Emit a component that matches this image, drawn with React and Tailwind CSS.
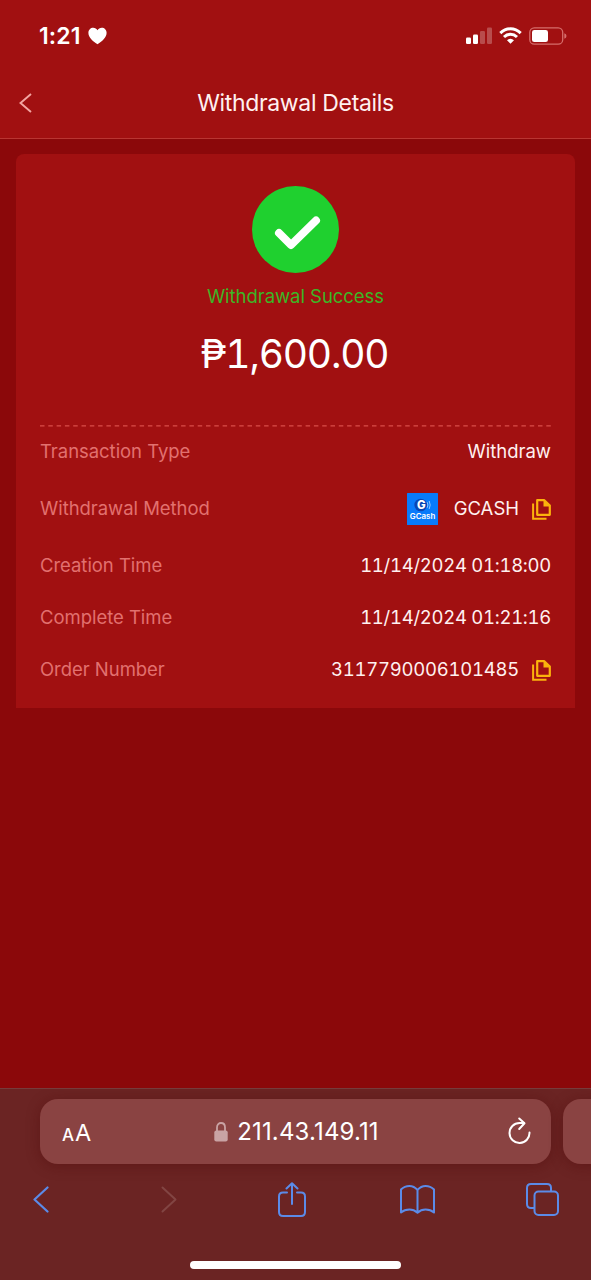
const MUTED = "text-[#e2716f]"

function CopyIcon() {
  return (
    <svg width="19" height="21" viewBox="0 0 19 21" fill="none" stroke="#fbb30c" strokeWidth="2.200">
      <path d="M1.100 4.500V19.800H14.500" strokeWidth="2" />
      <path d="M5.200 1.200H12.300L17.800 6.500V15.800H5.200Z" strokeLinejoin="round" />
      <path d="M11.500 1V7.500H18L12.500 1.500Z" fill="#fbb30c" stroke="none" />
    </svg>
  )
}

function GcashLogo() {
  return (
    <svg width="31" height="32" viewBox="0 0 31 32">
      <rect width="31" height="32" rx="0.500" fill="#087bfb" />
      <circle cx="13.700" cy="12" r="6.300" fill="#0a45b4" />
      <text x="14.300" y="16" textAnchor="middle" fontFamily="Inter, sans-serif" fontSize="11.500" fontWeight="800" fill="#fff">G</text>
      <path d="M20.200 9.200Q21.600 12 20.200 14.800M22.200 8Q24.200 12 22.200 16" fill="none" stroke="#8cc4ff" strokeWidth="1" />
      <text x="15.500" y="26" textAnchor="middle" textLength="25.500" lengthAdjust="spacingAndGlyphs" fontFamily="Inter, sans-serif" fontSize="7.500" fontWeight="600" fill="#fff">GCash</text>
    </svg>
  )
}

function StatusBar() {
  return (
    <div className="h-[70px] flex items-center justify-between pl-[39px] pr-[24px] pt-[1px]">
      <div className="flex items-center gap-[7px]">
        <span className="text-[23px] leading-none font-semibold tracking-[0.1px] pt-[1px]">1:21</span>
        <svg width="19" height="18" viewBox="0 0 19 18" fill="#fff">
          <path d="M9.5 17.3C4.5 14 .4 10.400.4 5.800C.4 2.800 2.600.7 5.200.7C7.100.7 8.700 1.700 9.500 3.200C10.300 1.700 11.900.7 13.800.7C16.400.7 18.600 2.800 18.600 5.800C18.600 10.400 14.500 14 9.500 17.300Z" />
        </svg>
      </div>
      <div className="flex items-center gap-[7px]">
        <svg width="27" height="17" viewBox="0 0 27 17" fill="#fff">
          <rect x="1" y="10.500" width="5" height="6.500" rx="1.300" />
          <rect x="8" y="7.500" width="5" height="9.500" rx="1.300" />
          <rect x="15" y="4" width="5" height="13" rx="1.300" opacity=".25" />
          <rect x="22" y="0.500" width="5" height="16.500" rx="1.300" opacity=".25" />
        </svg>
        <svg width="23" height="17" viewBox="0 0 23 17" fill="none" stroke="#fff" strokeWidth="3">
          <path d="M1.300 6.100Q5.800 1.800 11.500 1.800T21.700 6.100" />
          <path d="M5 10Q7.900 7.300 11.500 7.300T18 10" />
          <path d="M11.500 16.800L8 13.300Q11.500 10.300 15 13.300Z" fill="#fff" stroke="none" />
        </svg>
        <svg width="38" height="18" viewBox="0 0 38 18" fill="none">
          <rect x=".8" y=".8" width="32.900" height="16.400" rx="4.500" stroke="#d56d6b" strokeWidth="1.300" />
          <rect x="3" y="3" width="16" height="12" rx="2.300" fill="#fff" />
          <path d="M35.300 6.300Q37.500 7 37.500 9T35.300 11.700Z" fill="#d56d6b" />
        </svg>
      </div>
    </div>
  )
}

function Row({ label, children, tall }) {
  return (
    <div className={`flex items-center justify-between text-[18.5px] ${tall ? "h-[62px]" : "h-[52px]"}`}>
      <span className={`${MUTED} tracking-[-0.04px]`}>{label}</span>
      <div className="flex items-center text-[#fff1f0] tabular-nums">{children}</div>
    </div>
  )
}

function BrowserBar() {
  return (
    <div className="h-[192px] bg-[#6b2423] border-t border-[#773b3b] overflow-hidden flex flex-col">
      <div className="flex gap-[12px] pl-10 pt-[10px]">
        <div className="w-[511px] h-[65px] shrink-0 rounded-[18px] bg-[#8a4342] shadow-[0_2px_14px_rgba(80,10,10,0.45)] flex items-center justify-between pl-[22px] pr-[20px]">
          <div className="flex items-baseline gap-[1px] w-[60px] pt-[3px]">
            <span className="text-[17px] leading-none font-medium">A</span>
            <span className="text-[23.5px] leading-none">A</span>
          </div>
          <div className="flex items-center gap-[9px]">
            <svg width="14" height="20" viewBox="0 0 14 20">
              <path d="M3 9V5.500C3 -.5 11 -.5 11 5.500V9" fill="none" stroke="#c9a3a4" strokeWidth="1.800" />
              <rect x=".3" y="8.500" width="13.400" height="11" rx="2" fill="#c9a3a4" />
            </svg>
            <span className="text-[24px] leading-none tracking-[0.15px]">211.43.149.11</span>
          </div>
          <div className="w-[60px] flex justify-end">
            <svg width="23" height="27" viewBox="0 0 23 27" fill="none" stroke="#fff" strokeWidth="2" strokeLinecap="round" strokeLinejoin="round" className="mb-[2px]">
              <path d="M21.500 15.500A10 10 0 1 1 11.500 6H16" />
              <path d="M11.200 1.500L16.500 6.300L11.200 12" />
            </svg>
          </div>
        </div>
        <div className="w-[80px] h-[65px] shrink-0 rounded-[18px] bg-[#8a4342] shadow-[0_2px_14px_rgba(80,10,10,0.45)]" />
      </div>
      <div className="h-[70px] grid grid-cols-5 place-items-center w-[628px] -ml-[22px]">
        <svg width="16" height="27" viewBox="0 0 16 27" fill="none" stroke="#5b8be8" strokeWidth="2.200" strokeLinecap="round" strokeLinejoin="round">
          <path d="M14.500 1.500L1.500 13.500L14.500 25.500" />
        </svg>
        <svg width="16" height="27" viewBox="0 0 16 27" fill="none" stroke="#824543" strokeWidth="2" strokeLinecap="round" strokeLinejoin="round" className="ml-[6px]">
          <path d="M1.500 1.500L14.500 13.500L1.500 25.500" />
        </svg>
        <svg width="28" height="35" viewBox="0 0 28 35" fill="none" stroke="#5b8be8" strokeWidth="2" strokeLinecap="round" strokeLinejoin="round">
          <path d="M9 10.500H5Q1 10.500 1 14.500V30Q1 34 5 34H23Q27 34 27 30V14.500Q27 10.500 23 10.500H19" />
          <path d="M14 22V1.500M8.500 6.500L14 1.200L19.500 6.500" />
        </svg>
        <svg width="35" height="29" viewBox="0 0 35 29" fill="none" stroke="#5b8be8" strokeWidth="2" strokeLinecap="round" strokeLinejoin="round">
          <path d="M17.500 5Q14 1 9.500 1Q4.500 1 1 4.500V27.500Q4.500 24.500 9.500 24.500Q14 24.500 17.500 27.700Q21 24.500 25.500 24.500Q30.500 24.500 34 27.500V4.500Q30.500 1 25.500 1Q21 1 17.500 5ZV27.500" />
        </svg>
        <svg width="33" height="33" viewBox="0 0 33 33" fill="none" stroke="#5b8be8" strokeWidth="2" className="mr-[2px]">
          <path d="M8 25H5Q1 25 1 21V5Q1 1 5 1H21Q25 1 25 5V8" />
          <rect x="8.500" y="8.500" width="23.500" height="23.500" rx="4" />
        </svg>
      </div>
      <div className="flex justify-center mt-[27px]">
        <div className="w-[211px] h-[8px] rounded-full bg-white" />
      </div>
    </div>
  )
}

function App() {
  return (
    <div className="w-[591px] h-[1280px] flex flex-col bg-[#8b080a] text-white font-[Inter,sans-serif] overflow-hidden">
      {/* Header */}
      <div className="h-[139px] bg-[#a11011] border-b border-[#b93532]">
        <StatusBar />
        <div className="h-[66px] grid grid-cols-[60px_1fr_60px] items-center">
          <svg width="13" height="20" viewBox="0 0 13 20" fill="none" stroke="#f3a5a2" strokeWidth="1.900" className="ml-[19px]">
            <path d="M12 1L1.500 10L12 19" />
          </svg>
          <h1 className="text-center text-[23px] leading-none tracking-[-0.33px] text-[#fff1f0]">Withdrawal Details</h1>
        </div>
      </div>

      {/* Details */}
      <div className="flex-1 px-4 pt-[15px]">
        <div className="h-[554px] bg-[#a11011] rounded-t-lg px-6 pt-8">
          <div className="h-[240px] flex flex-col items-center">
            <svg width="87" height="87" viewBox="0 0 87 87" fill="none">
              <circle cx="43.500" cy="43.500" r="43.500" fill="#1fd02f" />
              <path d="M27 47L39 59L64 34.500" stroke="#fff" strokeWidth="8" strokeLinecap="round" strokeLinejoin="round" />
            </svg>
            <p className="mt-[11px] text-[18.5px] leading-6 tracking-[-0.04px] text-[#3cb526]">Withdrawal Success</p>
            <p className="mt-[22px] text-[39px] leading-[48px] tracking-[-1.2px] tabular-nums pr-[2px]">₱1,600.00</p>
          </div>
          <svg width="512" height="2" className="block -mt-[1px] -mb-[1px]">
            <path d="M0 .8H512" stroke="#d94d49" strokeWidth="1.300" strokeDasharray="4.500 3.800" />
          </svg>
          <Row label="Transaction Type">Withdraw</Row>
          <Row label="Withdrawal Method" tall>
            <GcashLogo />
            <span className="ml-4 mr-[13px]">GCASH</span>
            <CopyIcon />
          </Row>
          <Row label="Creation Time">
            <span className="tracking-[-0.28px]">11/14/2024 01:18:00</span>
          </Row>
          <Row label="Complete Time">
            <span className="tracking-[-0.28px]">11/14/2024 01:21:16</span>
          </Row>
          <Row label="Order Number">
            <span className="tracking-[-0.24px] mr-[13px]">3117790006101485</span>
            <CopyIcon />
          </Row>
        </div>
      </div>

      <BrowserBar />
    </div>
  )
}

export default App
